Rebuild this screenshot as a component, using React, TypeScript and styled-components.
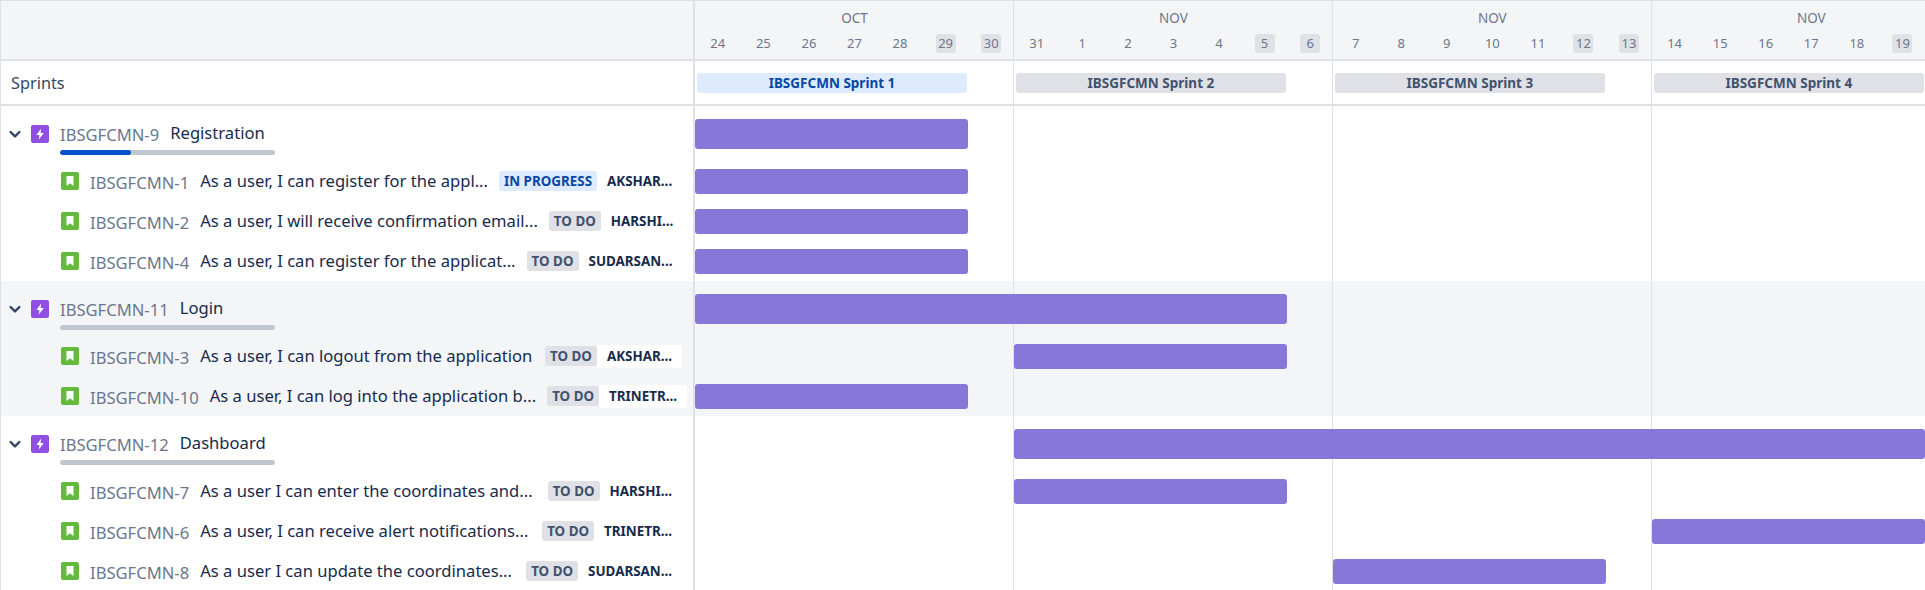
import React from "react";
import styled, { createGlobalStyle } from "styled-components";

const Global = createGlobalStyle`
  html, body { margin: 0; padding: 0; background: #fff; overflow: hidden; }
  body { font-family: "Noto Sans", "Open Sans", sans-serif; color: #172b4d; }
`;

const DAY = 319 / 7;
const LINE = "#dfe1e6";

const Page = styled.div`
  width: 1925px;
  height: 590px;
  overflow: hidden;
  box-sizing: border-box;
  border-top: 1px solid ${LINE};
  border-left: 1px solid ${LINE};
`;

const Row = styled.div<{ $h: number; $grey?: boolean }>`
  display: grid;
  grid-template-columns: 694px 1276px;
  height: ${(p) => p.$h}px;
  background: ${(p) => (p.$grey ? "#f4f5f7" : "#fff")};
`;

const Side = styled.div`
  border-right: 2px solid ${LINE};
  display: flex;
  align-items: center;
  min-width: 0;
`;

const HeaderRow = styled(Row)`
  border-bottom: 2px solid ${LINE};
  box-sizing: border-box;
`;

const Track = styled.div`
  display: grid;
  grid-template-columns: repeat(28, ${DAY}px);
  background-image: linear-gradient(to right, ${LINE} 1px, transparent 1px);
  background-size: 319px 100%;
  background-position: 318px 0;
  align-content: start;
`;

const Month = styled.div`
  grid-column: span 7;
  height: 33px;
  padding-top: 9px;
  box-sizing: border-box;
  text-align: center;
  font-size: 13.5px;
  line-height: 16px;
  color: #6b778c;
`;

const Day = styled.div`
  display: flex;
  justify-content: center;
  font-size: 13px;
  color: #6b778c;
`;

const DayNum = styled.span<{ $off?: boolean }>`
  min-width: 20px;
  height: 19px;
  line-height: 19px;
  text-align: center;
  border-radius: 3px;
  background: ${(p) => (p.$off ? "#dfe1e6" : "transparent")};
`;

const SprintsLabel = styled.div`
  padding-left: 10px;
  font-size: 16.3px;
  color: #344563;
`;

const PillCell = styled.div`
  grid-column: span 7;
  padding: 12px 47px 0 2px;
`;

const Pill = styled.div<{ $active?: boolean }>`
  height: 20px;
  line-height: 20px;
  border-radius: 3px;
  text-align: center;
  font-size: 13.5px;
  font-weight: 700;
  background: ${(p) => (p.$active ? "#deebff" : "#dfe1e6")};
  color: ${(p) => (p.$active ? "#0747a6" : "#42526e")};
`;

const Bar = styled.div<{ $start: number; $span: number; $epic?: boolean }>`
  grid-column: ${(p) => p.$start} / span ${(p) => p.$span};
  height: ${(p) => (p.$epic ? 30 : 25)}px;
  margin-top: ${(p) => (p.$epic ? 13 : 8)}px;
  background: #8777d9;
  border-radius: 3px;
`;

const Chevron = styled.svg`
  width: 14px;
  height: 14px;
  margin: 0 9px 0 7px;
  flex: none;
`;

const IconBox = styled.svg`
  width: 18px;
  height: 18px;
  flex: none;
`;

const EpicHead = styled.div`
  display: flex;
  align-items: center;
  height: 18px;
  margin-top: 4px;
  flex: none;
`;

const EpicMain = styled.div`
  margin-left: 11px;
  display: flex;
  flex-direction: column;
  width: 215px;
  flex: none;
`;

const EpicLine = styled.div`
  display: flex;
  gap: 11px;
  white-space: nowrap;
  height: 24px;
  align-items: center;
`;

const Key = styled.span`
  font-size: 16.6px;
  margin-top: 2px;
  color: #6b778c;
  white-space: nowrap;
  flex: none;
`;

const Summary = styled.span`
  font-size: 16.6px;
  margin-top: -2px;
  color: #172b4d;
  white-space: nowrap;
  flex: none;
`;

const Progress = styled.div`
  height: 5px;
  margin-top: 5px;
  border-radius: 3px;
  background: #c1c7d0;
  overflow: hidden;
`;

const ProgressFill = styled.div`
  height: 100%;
  border-radius: 3px;
  background: #0052cc;
`;

const EpicSide = styled(Side)`
  padding-top: 15px;
  box-sizing: border-box;
  align-items: flex-start;
`;

const StorySide = styled(Side)`
  padding: 0 11px 0 60px;
  box-sizing: border-box;
  gap: 11px;
`;

const Right = styled.div`
  margin-left: auto;
  display: flex;
  align-items: center;
  flex: none;
`;

const Lozenge = styled.span<{ $progress?: boolean }>`
  height: 20px;
  line-height: 20px;
  padding: 0 5px;
  border-radius: 3px;
  font-size: 13.4px;
  font-weight: 700;
  white-space: nowrap;
  background: ${(p) => (p.$progress ? "#deebff" : "#dfe1e6")};
  color: ${(p) => (p.$progress ? "#0747a6" : "#42526e")};
`;

const Assignee = styled.span<{ $chip?: boolean }>`
  height: 23px;
  line-height: 23px;
  padding: 0 10px;
  border-radius: 3px;
  font-size: 13.4px;
  font-weight: 700;
  color: #172b4d;
  white-space: nowrap;
  background: ${(p) => (p.$chip ? "#fff" : "transparent")};
`;

const EpicIcon = () => (
  <IconBox viewBox="0 0 18 18">
    <rect width="18" height="18" rx="2" fill="#904ee2" />
    <path d="M10.2 3.5 5.4 10h3l-.6 4.6L12.8 8H9.6z" fill="#fff" />
  </IconBox>
);

const StoryIcon = () => (
  <IconBox viewBox="0 0 18 18">
    <rect width="18" height="18" rx="2" fill="#63ba3c" />
    <path d="M5.5 4h7v10L9 11.2 5.5 14z" fill="#fff" />
  </IconBox>
);

const Caret = () => (
  <Chevron viewBox="0 0 14 14">
    <path d="M2.6 5l4.4 4.4L11.4 5" fill="none" stroke="#344563" strokeWidth="2.4" strokeLinecap="round" strokeLinejoin="round" />
  </Chevron>
);

const weeks = [
  { month: "OCT", days: [24, 25, 26, 27, 28, 29, 30] },
  { month: "NOV", days: [31, 1, 2, 3, 4, 5, 6] },
  { month: "NOV", days: [7, 8, 9, 10, 11, 12, 13] },
  { month: "NOV", days: [14, 15, 16, 17, 18, 19] },
];

type Story = { key: string; text: string; status: string; who: string; start: number; span: number };
type Epic = { key: string; name: string; progress: number; start: number; span: number; grey?: boolean; stories: Story[] };

const epics: Epic[] = [
  {
    key: "IBSGFCMN-9", name: "Registration", progress: 33, start: 1, span: 6,
    stories: [
      { key: "IBSGFCMN-1", text: "As a user, I can register for the appl...", status: "IN PROGRESS", who: "AKSHAR...", start: 1, span: 6 },
      { key: "IBSGFCMN-2", text: "As a user, I will receive confirmation email...", status: "TO DO", who: "HARSHI...", start: 1, span: 6 },
      { key: "IBSGFCMN-4", text: "As a user, I can register for the applicat...", status: "TO DO", who: "SUDARSAN...", start: 1, span: 6 },
    ],
  },
  {
    key: "IBSGFCMN-11", name: "Login", progress: 0, start: 1, span: 13, grey: true,
    stories: [
      { key: "IBSGFCMN-3", text: "As a user, I can logout from the application", status: "TO DO", who: "AKSHAR...", start: 8, span: 6 },
      { key: "IBSGFCMN-10", text: "As a user, I can log into the application b...", status: "TO DO", who: "TRINETR...", start: 1, span: 6 },
    ],
  },
  {
    key: "IBSGFCMN-12", name: "Dashboard", progress: 0, start: 8, span: 20,
    stories: [
      { key: "IBSGFCMN-7", text: "As a user I can enter the coordinates and...", status: "TO DO", who: "HARSHI...", start: 8, span: 6 },
      { key: "IBSGFCMN-6", text: "As a user, I can receive alert notifications...", status: "TO DO", who: "TRINETR...", start: 22, span: 6 },
      { key: "IBSGFCMN-8", text: "As a user I can update the coordinates...", status: "TO DO", who: "SUDARSAN...", start: 15, span: 6 },
    ],
  },
];

export default function App() {
  return (
    <Page>
      <Global />
      <HeaderRow $h={60} $grey>
        <Side />
        <Track>
          {weeks.map((w, i) => (
            <Month key={i}>{w.month}</Month>
          ))}
          {weeks.flatMap((w) =>
            w.days.map((d, j) => (
              <Day key={`${w.month}${d}`}>
                <DayNum $off={j >= 5}>{d}</DayNum>
              </Day>
            ))
          )}
        </Track>
      </HeaderRow>
      <HeaderRow $h={45}>
        <Side>
          <SprintsLabel>Sprints</SprintsLabel>
        </Side>
        <Track>
          {[1, 2, 3, 4].map((n) => (
            <PillCell key={n}>
              <Pill $active={n === 1}>IBSGFCMN Sprint {n}</Pill>
            </PillCell>
          ))}
        </Track>
      </HeaderRow>
      {epics.map((e) => (
        <React.Fragment key={e.key}>
          <Row $h={55} $grey={e.grey}>
            <EpicSide>
              <EpicHead>
                <Caret />
                <EpicIcon />
              </EpicHead>
              <EpicMain>
                <EpicLine>
                  <Key>{e.key}</Key>
                  <Summary>{e.name}</Summary>
                </EpicLine>
                <Progress>
                  <ProgressFill style={{ width: `${e.progress}%` }} />
                </Progress>
              </EpicMain>
            </EpicSide>
            <Track>
              <Bar $epic $start={e.start} $span={e.span} />
            </Track>
          </Row>
          {e.stories.map((s) => (
            <Row $h={40} $grey={e.grey} key={s.key}>
              <StorySide>
                <StoryIcon />
                <Key>{s.key}</Key>
                <Summary>{s.text}</Summary>
                <Right>
                  <Lozenge $progress={s.status !== "TO DO"}>{s.status}</Lozenge>
                  <Assignee $chip={e.grey}>{s.who}</Assignee>
                </Right>
              </StorySide>
              <Track>
                <Bar $start={s.start} $span={s.span} />
              </Track>
            </Row>
          ))}
        </React.Fragment>
      ))}
    </Page>
  );
}
